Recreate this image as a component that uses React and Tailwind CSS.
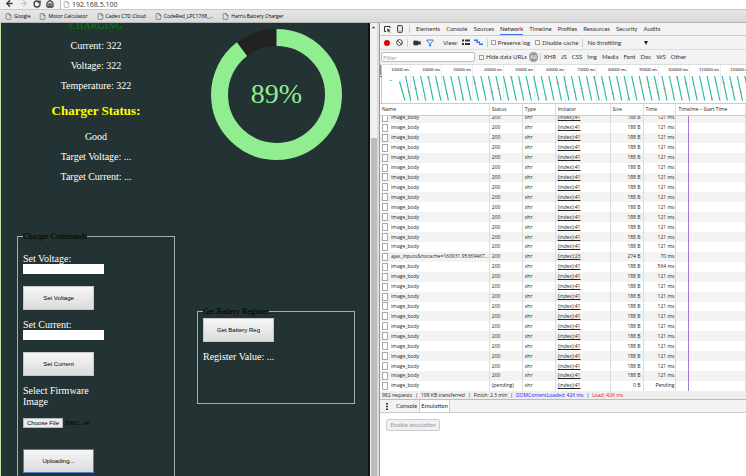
import { ArrowLeft, ArrowRight, RotateCw, House, File, Smartphone, Ban, Video, Filter } from "lucide-react";

const BOOKMARKS = [
  "Google",
  "Motor Calculator",
  "Cadex C7D Cloud",
  "CodeRed_LPC1768_...",
  "Harris Battery Charger",
];

const TABS = [
  "Elements",
  "Console",
  "Sources",
  "Network",
  "Timeline",
  "Profiles",
  "Resources",
  "Security",
  "Audits",
];

const FILTERS = ["XHR", "JS", "CSS", "Img", "Media", "Font", "Doc", "WS", "Other"];

const TICKS = Array.from({ length: 12 }, (_, i) => `${(i + 1) * 10000} ms`);

// where the slow request sits on each strand, top = 0, bottom = 1
const MARKS = [0.65, 0.5, null, 0.05, 0.3, 0.72, null, 0.95, null, 0.27, 0.45];

const REQUESTS = Array.from({ length: 28 }, (_, i) => {
  const row = { name: "image_body", status: "200", initiator: "(index):41", size: "188 B", time: "121 ms" };
  if (i === 14) {
    return { ...row, name: "ajax_inputs&nocache=160931.95369467...", initiator: "(index):23", size: "274 B", time: "70 ms" };
  }
  if (i === 15) return { ...row, time: "564 ms" };
  if (i === 27) return { ...row, status: "(pending)", size: "0 B", time: "Pending" };
  return row;
});

function BrowserBar() {
  return (
    <header className="shrink-0 font-['Open_Sans',sans-serif]">
      <div className="flex h-[9px] items-start overflow-hidden bg-[#f0f0f0] pl-[5px]">
        <div className="flex w-[55px] gap-[5px] text-[#444]">
          <button aria-label="Back"><ArrowLeft size={9} strokeWidth={4} className="-mt-px" /></button>
          <button aria-label="Forward"><ArrowRight size={9} strokeWidth={3} className="-mt-px text-[#c4c4c4]" /></button>
          <button aria-label="Reload"><RotateCw size={8} strokeWidth={4} className="-mt-px" /></button>
          <button aria-label="Home"><House size={8} strokeWidth={4} className="-mt-px" /></button>
        </div>
        <div className="flex h-[9px] flex-1 items-center gap-[2px] border-l border-[#c0c0c0] bg-white pl-[2px]">
          <File size={7} strokeWidth={2} className="-mt-px text-[#888]" />
          <input
            aria-label="Address"
            defaultValue="192.168.5.100"
            className="-mt-px h-[9px] flex-1 text-[7px] leading-[9px] text-[#333] outline-none"
          />
        </div>
      </div>
      <nav className="flex h-[14px] items-center gap-[9px] border-y border-t-[#c8c8c8] border-b-[#b4b4b4] bg-linear-to-b from-[#e6e6e6] to-[#d9d9d9] pl-[5px]">
        {BOOKMARKS.map((name) => (
          <a key={name} href="#" className="flex items-center gap-[2px] text-[5px] leading-[8px] whitespace-nowrap text-black">
            <File size={7} strokeWidth={2} className="text-[#555]" />
            {name}
          </a>
        ))}
      </nav>
    </header>
  );
}

function Gauge() {
  const r = 57;
  const length = 2 * Math.PI * r;
  return (
    <svg viewBox="0 0 131 131" className="mx-auto block h-[131px] w-[131px]">
      <circle cx="65.5" cy="65.5" r={r} fill="none" stroke="#222" strokeWidth="17" />
      <circle
        cx="65.5"
        cy="65.5"
        r={r}
        fill="none"
        stroke="#90ee90"
        strokeWidth="17"
        strokeDasharray={`${length * 0.895} ${length}`}
        transform="rotate(-90 65.5 65.5)"
      />
      <text x="65.5" y="74" textAnchor="middle" fontSize="28" fill="#90ee90" fontFamily="Liberation Serif, serif">
        89%
      </text>
    </svg>
  );
}

function PageButton({ children, focused }) {
  return (
    <button
      type="button"
      className={`block h-[24px] w-[71px] border bg-linear-to-b from-[#f6f6f6] to-[#dcdcdc] font-['Liberation_Sans',sans-serif] text-[6px] leading-[8px] text-black ${
        focused ? "border-[#4f7fc4]" : "border-[#c8c8c8]"
      }`}
    >
      {children}
    </button>
  );
}

function Field({ id, label }) {
  return (
    <>
      <label htmlFor={id} className="block">{label}</label>
      <input id={id} className="mb-[12px] block h-[10px] w-[81px] bg-white px-1 text-[6px] text-black" />
    </>
  );
}

function ChargerPage() {
  return (
    <main className="min-w-0 flex-1 overflow-hidden border-r-2 border-[#0c1414] bg-[#233333] pr-[2px] pl-[5px] font-['Liberation_Serif',serif] text-[10px] leading-[11px] text-white">
      <div className="-mt-[3px] grid grid-cols-2">
        <section>
          <div className="space-y-[9px] text-center">
            <p className="text-[#008000]">CHARGING</p>
            <p>Current: 322</p>
            <p>Voltage: 322</p>
            <p>Temperature: 322</p>
          </div>
          <h2 className="my-[13px] text-center text-[13px] leading-[14px] font-bold text-[#ffff00]">Charger Status:</h2>
          <div className="space-y-[9px] text-center">
            <p>Good</p>
            <p>Target Voltage: ...</p>
            <p>Target Current: ...</p>
          </div>
          <fieldset className="mx-[11px] mt-[50px] h-[300px] border border-[#a8adad] px-[5px] pt-[12px]">
            <legend className="text-[8px] leading-[9px] text-black">Charger Commands</legend>
            <Field id="voltage" label="Set Voltage:" />
            <PageButton>Set Voltage</PageButton>
            <div className="mt-[9px]">
              <Field id="current" label="Set Current:" />
            </div>
            <PageButton>Set Current</PageButton>
            <p className="mt-[9px] w-[81px]">Select Firmware Image</p>
            <div className="mt-[11px] mb-[21px] flex h-[10px] items-center gap-[2px] font-['Liberation_Sans',sans-serif] text-[6px] leading-[8px] text-black">
              <label htmlFor="firmware" className="h-[10px] w-[40px] border border-[#b8b8b8] bg-[#ececec] text-center">
                Choose File
              </label>
              <input id="firmware" type="file" className="sr-only" />
              <span>SWC...ef</span>
            </div>
            <PageButton focused>Uploading...</PageButton>
          </fieldset>
        </section>
        <section className="pt-[9px]">
          <Gauge />
          <fieldset className="mx-[11px] mt-[147px] h-[97px] border border-[#a8adad] px-[5px] pt-[2px]">
            <legend className="text-[8px] leading-[9px] text-black">Get Battery Register</legend>
            <PageButton>Get Battery Reg</PageButton>
            <p className="mt-[9px]">Register Value: ...</p>
          </fieldset>
        </section>
      </div>
    </main>
  );
}

function Scrollbar() {
  return (
    <div className="flex w-[9px] shrink-0 flex-col items-center border-r-2 border-[#dcdcdc] bg-[#f1f1f1]">
      <svg viewBox="0 0 8 8" className="h-[8px] w-[7px]">
        <path d="M2 5.5 4 3l2 2.5z" fill="#444" />
      </svg>
      <div className="mt-[107px] w-[6px] flex-1 bg-[#bcbcbc]" />
    </div>
  );
}

function Check({ children }) {
  return (
    <label className="flex items-center gap-[2px]">
      <input type="checkbox" className="h-[5px] w-[5px] appearance-none border border-[#a0a0a0] bg-[#f6f6f6]" />
      {children}
    </label>
  );
}

function Divider() {
  return <span className="h-[8px] w-px bg-[#ccc]" />;
}

function InspectIcon() {
  return (
    <svg viewBox="0 0 14 14" className="h-[7px] w-[7px]" fill="none" stroke="#333" strokeWidth="2">
      <path d="M4 11H1V1h11v3" />
      <path d="M6 5l7 3-3 1.5 3 3-1 1-3-3L7.5 13z" fill="#333" stroke="none" />
    </svg>
  );
}

function ListIcon() {
  return (
    <svg viewBox="0 0 16 14" className="h-[7px] w-[8px]" fill="#333">
      <path d="M0 1h4v4H0zM6 1h10v4H6zM0 8h4v4H0zM6 8h10v4H6z" />
    </svg>
  );
}

function WaterfallIcon() {
  return (
    <svg viewBox="0 0 18 14" className="h-[7px] w-[9px]" fill="#3b78e7">
      <path d="M0 1h8v3H0zM5 5h7v3H5zM10 9h8v3h-8z" />
      <path d="M1 2l15 10" stroke="#3b78e7" strokeWidth="1.5" />
    </svg>
  );
}

function Toolbar() {
  return (
    <div className="flex h-[14px] shrink-0 items-center border-b border-[#ddd] bg-[#f3f3f3] pl-[4px]">
      <button aria-label="Record" className="h-[6px] w-[6px] rounded-full bg-[#e00000]" />
      <button aria-label="Clear" className="mr-[4px] ml-[6px]"><Ban size={7} strokeWidth={3} /></button>
      <Divider />
      <button aria-label="Screenshots" className="ml-[5px]"><Video size={8} fill="currentColor" /></button>
      <button aria-label="Filter" className="ml-[5px]"><Filter size={8} strokeWidth={3} className="text-[#3b78e7]" /></button>
      <span className="ml-[9px]">View:</span>
      <button aria-label="Large rows" className="ml-[4px]"><ListIcon /></button>
      <button aria-label="Overview" className="mr-[4px] ml-[4px]"><WaterfallIcon /></button>
      <Divider />
      <div className="mr-[4px] ml-[3px] flex gap-[5px]">
        <Check>Preserve log</Check>
        <Check>Disable cache</Check>
      </div>
      <Divider />
      <select aria-label="Throttling" className="ml-[4px] w-[57px] appearance-none bg-transparent">
        <option>No throttling</option>
      </select>
      <svg viewBox="0 0 8 8" className="h-[4px] w-[4px]"><path d="M0 0h8L4 8z" fill="#222" /></svg>
    </div>
  );
}

function FilterBar() {
  return (
    <div className="flex h-[14px] shrink-0 items-center bg-[#f3f3f3] pl-px">
      <input
        aria-label="Filter"
        placeholder="Filter"
        className="mr-[4px] h-[10px] w-[94px] rounded-xs border border-[#bbb] bg-white px-px text-[6px] leading-[8px] placeholder:text-[#aaa]"
      />
      <Check>Hide data URLs</Check>
      <button className="mr-[2px] ml-[2px] h-[10px] rounded-full bg-[#9a9a9a] px-px text-white">All</button>
      <Divider />
      <div className="ml-[3px] flex gap-[5px]">
        {FILTERS.map((name) => (
          <button key={name}>{name}</button>
        ))}
      </div>
    </div>
  );
}

function Overview() {
  return (
    <div className="relative h-[39px] shrink-0 overflow-hidden border-t border-[#ddd] bg-white">
      <div className="flex h-full text-[4px] leading-[10px] text-[#222]">
        {TICKS.map((tick) => (
          <span key={tick} className="w-[31px] shrink-0 border-r border-[#eee] pr-px text-right">{tick}</span>
        ))}
      </div>
      <svg className="absolute inset-0 h-full w-full">
        <rect width="1.5" height="10" fill="#888" />
        <path d="M1.5 10v28" stroke="#f4b8a0" />
        <path d="M0 11.5h2" stroke="#3b78e7" />
        <path d="M10 15.5h1.5M19.5 16.5l5.5 19" stroke="#2bb8a6" strokeWidth="1.2" />
        {Array.from({ length: 150 }, (_, i) => {
          const x = 25.5 + i * 7.54;
          const mark = MARKS[i % MARKS.length];
          return (
            <g key={i}>
              <path d={`M${x} 11l5.2 24.5`} stroke="#2bb8a6" strokeWidth="1.2" />
              {mark !== null && <rect x={x + 5.2 * mark - 1} y={10.5 + 24.5 * mark} width="2" height="1.2" fill="#b99a35" />}
            </g>
          );
        })}
      </svg>
    </div>
  );
}

function Columns() {
  return (
    <colgroup>
      <col className="w-[30%]" />
      <col className="w-[9%]" />
      <col className="w-[9%]" />
      <col className="w-[15%]" />
      <col className="w-[9%]" />
      <col className="w-[9%]" />
      <col />
    </colgroup>
  );
}

function Requests() {
  return (
    <div className="shrink-0 font-['Open_Sans',sans-serif] text-[5px] leading-[9px] text-[#222]">
      <table className="h-[13px] w-full table-fixed border-separate border-spacing-0 border-y border-[#ccc]">
        <Columns />
        <thead>
          <tr className="text-left [&>th]:border-r [&>th]:border-[#ddd] [&>th]:p-0 [&>th]:pl-[2px] [&>th]:font-normal">
            <th>Name</th>
            <th>Status</th>
            <th>Type</th>
            <th>Initiator</th>
            <th>Size</th>
            <th>Time</th>
            <th>Timeline – Start Time</th>
          </tr>
        </thead>
      </table>
      <div className="relative flex h-[275px] flex-col justify-end overflow-hidden">
        <table className="h-[278px] w-full shrink-0 table-fixed border-separate border-spacing-0">
          <Columns />
          <tbody>
            {REQUESTS.map((row, i) => (
              <tr key={i} className="odd:bg-[#f3f3f3] [&>td]:border-r [&>td]:border-[#ddd] [&>td]:p-0">
                <td>
                  <span className="flex items-center gap-[3px] pl-[2px]">
                    <span className="h-[8px] w-[6px] shrink-0 border border-[#a8a8a8] bg-white" />
                    {row.name}
                  </span>
                </td>
                <td><span className="pl-[2px]">{row.status}</span></td>
                <td><span className="pl-[2px]">xhr</span></td>
                <td><a href="#" className="ml-[2px] underline">{row.initiator}</a></td>
                <td className="text-right"><span className="pr-[2px]">{row.size}</span></td>
                <td className="text-right"><span className="pr-px">{row.time}</span></td>
                <td />
              </tr>
            ))}
          </tbody>
        </table>
        <div className="absolute inset-y-0 left-[84%] ml-px w-px bg-[#a47bd0]" />
      </div>
    </div>
  );
}

function Drawer() {
  return (
    <>
      <div className="flex h-[9px] shrink-0 items-center gap-[3px] border-b border-[#bbb] bg-[#eee] pl-[2px] font-['Open_Sans',sans-serif] text-[5px] text-[#222]">
        <span>982 requests</span>
        <span>|</span>
        <span>198 KB transferred</span>
        <span>|</span>
        <span>Finish: 2.3 min</span>
        <span>|</span>
        <span className="text-[#1a1aff]">DOMContentLoaded: 426 ms</span>
        <span>|</span>
        <span className="text-[#e02020]">Load: 426 ms</span>
      </div>
      <nav className="flex h-[13px] shrink-0 items-stretch border-b border-[#ccc] bg-[#f3f3f3] pl-[6px]">
        <button aria-label="More tools" className="mr-[6px]">
          <svg viewBox="0 0 4 14" className="h-[7px] w-[2px]" fill="#333">
            <path d="M0 0h4v3H0zM0 5.5h4v3H0zM0 11h4v3H0z" />
          </svg>
        </button>
        <button className="px-[2px]">Console</button>
        <button className="border-x border-[#ccc] bg-white px-px text-[#222]">Emulation</button>
      </nav>
      <div className="flex-1 bg-white px-[6px] pt-[6px]">
        <button disabled className="h-[12px] w-[54px] rounded-xs border border-[#ccc] bg-[#f0f0f0] text-[#999]">
          Enable emulation
        </button>
      </div>
    </>
  );
}

function DevTools() {
  return (
    <aside className="flex min-w-0 flex-col overflow-hidden border-l border-[#999] bg-white font-['Lato',sans-serif] text-[6px] leading-[8px] whitespace-nowrap text-[#333]">
      <nav className="flex h-[13px] shrink-0 items-center border-b border-[#ccc] bg-[#f3f3f3] pl-[4px]">
        <button aria-label="Inspect"><InspectIcon /></button>
        <button aria-label="Device mode" className="mr-[5px] ml-[5px]"><Smartphone size={8} strokeWidth={3} /></button>
        <Divider />
        <div className="ml-[6px] flex h-full gap-[6px]">
          {TABS.map((tab) => (
            <button
              key={tab}
              className={`border-b pt-px ${tab === "Network" ? "border-[#3b78e7] text-[#222]" : "border-transparent"}`}
            >
              {tab}
            </button>
          ))}
        </div>
      </nav>
      <Toolbar />
      <FilterBar />
      <Overview />
      <Requests />
      <Drawer />
    </aside>
  );
}

export default function App() {
  return (
    <div className="flex h-screen flex-col overflow-hidden bg-white">
      <BrowserBar />
      <div className="grid min-h-0 flex-1 grid-cols-[379fr_367fr]">
        <div className="flex min-w-0 border-l border-[#bfe3a8]">
          <ChargerPage />
          <Scrollbar />
        </div>
        <DevTools />
      </div>
    </div>
  );
}
